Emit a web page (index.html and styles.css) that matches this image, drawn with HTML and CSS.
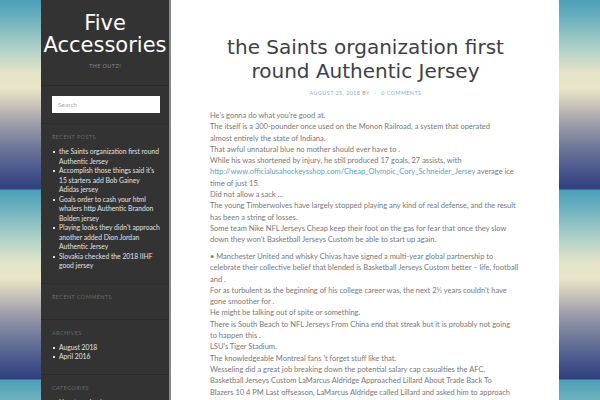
FILE: index.html
```html
<!DOCTYPE html>
<html lang="en">
<head>
<meta charset="utf-8">
<title>Five Accessories</title>
<link rel="stylesheet" href="styles.css">
</head>
<body>
<div class="page">
  <aside class="sidebar">
    <header class="site-header">
      <h1 class="site-title">Five Accessories</h1>
      <p class="tagline">THE OUTZ!</p>
    </header>
    <div class="widget search-widget">
      <input class="search" type="text" placeholder="Search">
    </div>
    <div class="widget">
      <h3 class="widget-title">RECENT POSTS</h3>
      <ul class="widget-list">
        <li>the Saints organization first round Authentic Jersey</li>
        <li>Accomplish those things said it's<br>15 starters add Bob Gainey Adidas jersey</li>
        <li>Goals order to cash your html whalers http Authentic Brandon Bolden jersey</li>
        <li>Playing looks they didn't approach another added Dion Jordan Authentic Jersey</li>
        <li>Slovakia checked the 2018 IIHF good jersey</li>
      </ul>
    </div>
    <div class="widget">
      <h3 class="widget-title">RECENT COMMENTS</h3>
    </div>
    <div class="widget">
      <h3 class="widget-title">ARCHIVES</h3>
      <ul class="widget-list">
        <li>August 2018</li>
        <li>April 2016</li>
      </ul>
    </div>
    <div class="widget">
      <h3 class="widget-title">CATEGORIES</h3>
      <ul class="widget-list">
        <li>Uncategorized</li>
      </ul>
    </div>
  </aside>
  <main class="main">
    <h2 class="entry-title">the Saints organization first round Authentic Jersey</h2>
    <div class="meta"><span class="date">AUGUST 25, 2018</span> <span class="by">BY</span> <span class="dot">·</span> <span class="comments">0 COMMENTS</span></div>
    <div class="entry">
      <p>He's gonna do what you're good at.<br>
      The itself is a 300-pounder once used on the Monon Railroad, a system that operated<br>almost entirely the state of Indiana.<br>
      That awful unnatural blue no mother should ever have to .<br>
      While his was shortened by injury, he still produced 17 goals, 27 assists, with <a href="#">http://www.officialusahockeysshop.com/Cheap_Olympic_Cory_Schneider_Jersey</a> average ice time of just 15.<br>
      Did not allow a sack …<br>
      The young Timberwolves have largely stopped playing any kind of real defense, and the result has been a string of losses.<br>
      Some team Nike NFL Jerseys Cheap keep their foot on the gas for fear that once they slow down they won't Basketball Jerseys Custom be able to start up again.</p>
      <p>• Manchester United and whisky Chivas have signed a multi-year global partnership to celebrate their collective belief that blended is Basketball Jerseys Custom better – life, football and .<br>
      For as turbulent as the beginning of his college career was, the next 2½ years couldn't have gone smoother for .<br>
      He might be talking out of spite or something.<br>
      There is South Beach to NFL Jerseys From China end that streak but it is probably not going<br>to happen this .<br>
      LSU's Tiger Stadium.<br>
      The knowledgeable Montreal fans 't forget stuff like that.<br>
      Wesseling did a great job breaking down the potential salary cap casualties the AFC.<br>
      Basketball Jerseys Custom LaMarcus Aldridge Approached Lillard About Trade Back To<br>Blazers 10 4 PM Last offseason, LaMarcus Aldridge called Lillard and asked him to approach<br>Olshey about a trade that would bring him back to the Portland Trail Blazers.</p>
    </div>
  </main>
</div>
</body>
</html>
```
FILE: styles.css
```css
html, body {
  margin: 0;
  padding: 0;
}
body {
  background: repeating-linear-gradient(180deg,
    #4a9fb9 0px,
    #6fb3bf 20px,
    #b3d3c8 50px,
    #e2e3c8 72px,
    #ebe6c9 88px,
    #c9c5ba 105px,
    #a1a0aa 122px,
    #6e7799 148px,
    #46558c 172px,
    #31407c 189px,
    #4a9fb9 190px);
  font-family: Lato, "Open Sans", sans-serif;
  height: 400px;
  overflow: hidden;
}
.page {
  width: 518px;
  margin: 0 auto;
  display: flex;
  min-height: 400px;
}
.sidebar {
  width: 128px;
  flex: 0 0 128px;
  background: #333333;
  border-right: 2px solid #8a8a8a;
  color: #dddddd;
}
.site-header {
  padding: 12px 0 15px;
  text-align: center;
  border-bottom: 1px solid #2a2a2a;
}
.site-title {
  margin: 0;
  font-family: "DejaVu Sans", sans-serif;
  font-weight: normal;
  font-size: 21px;
  line-height: 22px;
  color: #ffffff;
}
.tagline {
  margin: 6px 0 0;
  font-size: 5.5px;
  line-height: 8px;
  letter-spacing: 0.4px;
  color: #8a8a8a;
}
.widget {
  padding: 9px 9px 12px 11px;
  border-bottom: 1px solid #2a2a2a;
}
.search-widget {
  padding: 10px 11px 10px;
}
.search {
  display: block;
  box-sizing: border-box;
  width: 108px;
  height: 17px;
  margin: 0;
  border: 0;
  padding: 0 6px;
  background: #ffffff;
  font-family: Lato, sans-serif;
  font-size: 6.5px;
  color: #999;
  outline: none;
}
.search::placeholder {
  color: #aaaaaa;
}
.widget-title {
  margin: 0 0 6px;
  font-size: 5.5px;
  line-height: 8px;
  font-weight: normal;
  letter-spacing: 0.4px;
  color: #6a6a6a;
}
.widget-list {
  margin: 0;
  padding: 0 0 0 7px;
  list-style: none;
}
.widget-list li {
  position: relative;
  font-size: 6.75px;
  line-height: 9.5px;
  color: #e2e2e2;
}
.widget-list li::before {
  content: "";
  position: absolute;
  left: -6px;
  top: 4px;
  width: 2px;
  height: 2px;
  background: #dddddd;
}
.main {
  width: 388px;
  flex: 0 0 388px;
  box-sizing: border-box;
  background: #ffffff;
  padding: 35px 38px 20px 39px;
}
.entry-title {
  margin: 0;
  font-family: "DejaVu Sans", sans-serif;
  font-weight: normal;
  font-size: 20px;
  line-height: 24px;
  text-align: center;
  color: #3b4146;
}
.meta {
  margin-top: 6px;
  text-align: center;
  font-size: 5.3px;
  line-height: 8px;
  letter-spacing: 0.5px;
  color: #7fb0cb;
}
.meta .by {
  color: #999;
}
.meta .dot {
  margin: 0 3px;
  color: #aaa;
}
.entry {
  margin-top: 13px;
  font-size: 7.5px;
  line-height: 11.3px;
  color: #787878;
}
.entry p {
  margin: 0 0 5.4px;
}
.entry a {
  color: #5aa3c3;
  text-decoration: none;
}
```
